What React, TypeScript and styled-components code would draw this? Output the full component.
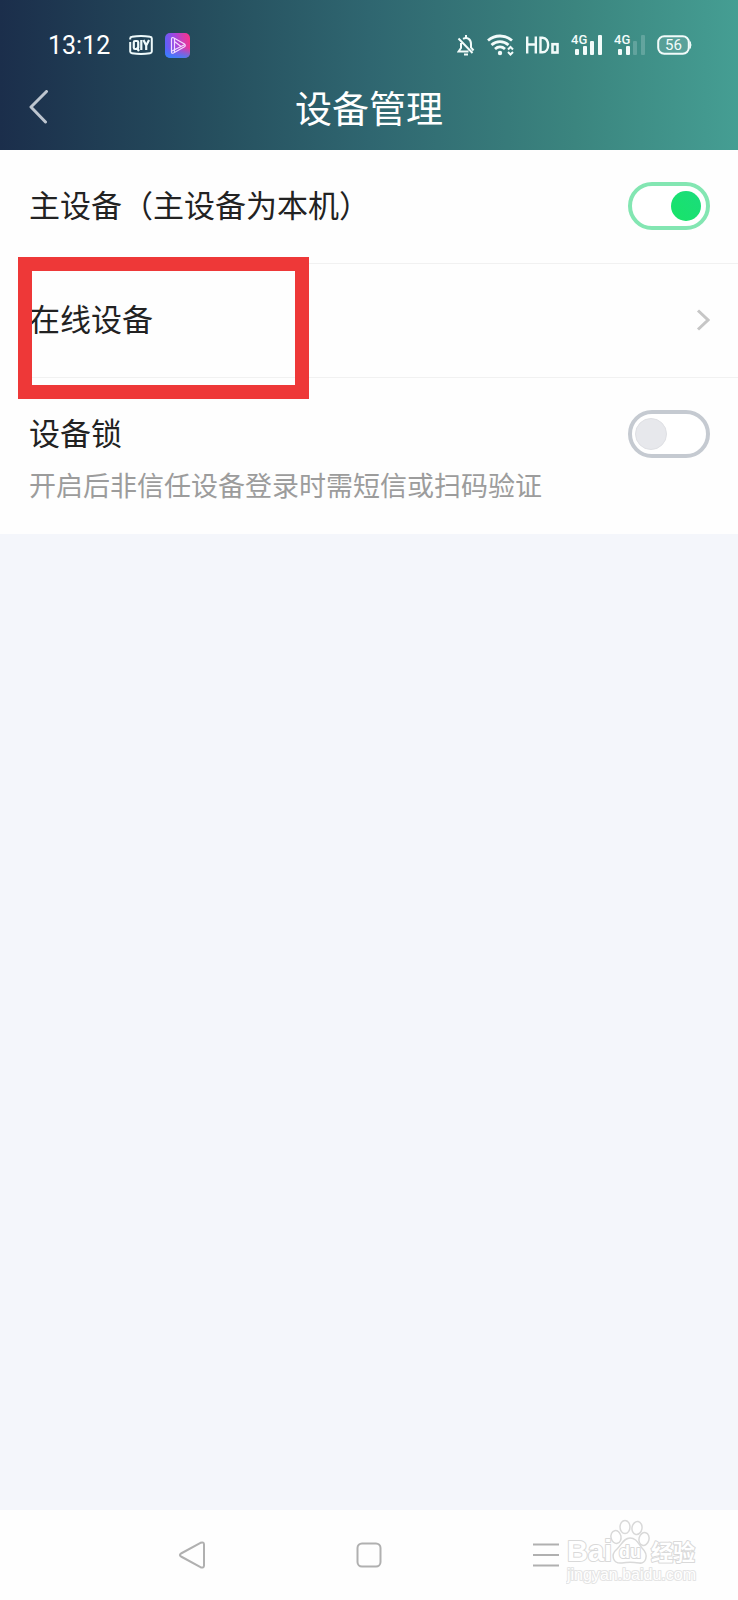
import React, { useState } from "react";
import styled, { createGlobalStyle } from "styled-components";

const GlobalStyle = createGlobalStyle`
  * { box-sizing: border-box; }
  html, body { margin: 0; padding: 0; }
  body {
    background: #f4f6fb;
    font-family: Roboto, "Noto Sans CJK SC", sans-serif;
    color: #222;
  }
`;

const Page = styled.div`
  min-height: 100vh;
  display: flex;
  flex-direction: column;
  background: #f4f6fb;
`;

const Header = styled.header`
  padding-top: 30px;
  color: #fff;
  background: linear-gradient(90deg, #1b2e4b 0%, #26505f 30%, #2f6670 50%, #3b857f 78%, #459e93 100%);
`;

const StatusBar = styled.div`
  height: 30px;
  padding: 0 46px 0 48px;
  display: flex;
  align-items: center;
  justify-content: space-between;
`;

const StatusGroup = styled.div`
  display: flex;
  align-items: center;
  gap: 12px;
  svg { display: block; }
`;

const Clock = styled.time`
  font-size: 25px;
  line-height: 30px;
  padding-top: 2px;
  margin-right: 7px;
`;

const TitleBar = styled.div`
  height: 90px;
  padding: 4px 24px 0;
  display: grid;
  grid-template-columns: 48px 1fr 48px;
  align-items: center;
`;

const BackButton = styled.button`
  height: 48px;
  padding: 0 0 0 5px;
  border: 0;
  background: none;
  display: flex;
  align-items: center;
`;

const Title = styled.h1`
  margin: 0;
  padding-top: 8px;
  font-size: 37px;
  line-height: 54px;
  font-weight: 400;
  text-align: center;
`;

const List = styled.main`
  background: #fefefe;
`;

const Row = styled.section<{ $divided?: boolean }>`
  position: relative;
  margin-left: 29px;
  padding: 32px 28px ${(p) => (p.$divided ? 33 : 29)}px 0;
  border-bottom: ${(p) => (p.$divided ? "1px solid #f1f1f1" : "0")};
`;

const RowLine = styled.div`
  display: flex;
  align-items: center;
  justify-content: space-between;
`;

const rowText = `
  padding-top: 2px;
  font-size: 31px;
  line-height: 46px;
  font-weight: 400;
  color: #222;
`;

const RowLabel = styled.label`
  ${rowText}
`;

const RowText = styled.span`
  ${rowText}
`;

const RowLink = styled.a`
  display: flex;
  flex: 1;
  align-items: center;
  justify-content: space-between;
  text-decoration: none;
`;

const Note = styled.p`
  margin: 11px 0 0;
  font-size: 27px;
  line-height: 36px;
  color: #9c9c9c;
`;

const Switch = styled.input`
  appearance: none;
  flex: none;
  margin: 0;
  width: 82px;
  height: 48px;
  padding: 0 5px 0 3px;
  border: 4px solid #c5cad1;
  border-radius: 24px;
  background: #fff;
  display: flex;
  align-items: center;

  &::before {
    content: "";
    width: 30px;
    height: 30px;
    border-radius: 50%;
    background: #e7e8ec;
    border: 1px solid #dfe0e4;
  }

  &:checked {
    justify-content: flex-end;
    border-color: #83e6b2;
  }

  &:checked::before {
    background: linear-gradient(45deg, #17e468, #1bdc7c);
    border: 0;
  }
`;

const Highlight = styled.div`
  position: absolute;
  top: -7px;
  left: -11px;
  width: 291px;
  height: 142px;
  border: 14px solid #ee3838;
  pointer-events: none;
  z-index: 1;
`;

const NavBar = styled.nav`
  position: relative;
  margin-top: auto;
  height: 90px;
  padding: 0 14%;
  background: #fefefe;
  display: flex;
`;

const NavButton = styled.button`
  flex: 1;
  padding: 0;
  border: 0;
  background: none;
  display: flex;
  align-items: center;
  justify-content: center;
`;

const Watermark = styled.div`
  position: absolute;
  right: 38px;
  top: 8px;
  svg { display: block; }
`;

function QiyIcon() {
  return (
    <svg width="24" height="20" viewBox="0 0 24 20" fill="none" stroke="#eefafb" aria-hidden="true">
      <path d="M1.200 4.500V3.500Q1.200 2 3 1.800Q12 0.200 21 1.800Q22.800 2 22.800 3.500V16.500Q22.800 18 21 18.200Q12 19.800 3 18.200Q1.200 18 1.200 16.500V7" strokeWidth="2" />
      <rect x="4.800" y="6" width="4.400" height="8" rx="1.200" strokeWidth="2.200" />
      <path d="M7.500 12.500L10 16M12.300 5V15M14.500 5L17.200 10.500L20 5M17.200 10V15" strokeWidth="2.200" />
    </svg>
  );
}

function VideoAppIcon() {
  return (
    <svg width="25" height="25" viewBox="0 0 25 25" aria-hidden="true">
      <defs>
        <linearGradient id="appFill" x1="0" y1="0.600" x2="1" y2="0.400">
          <stop offset="0" stopColor="#5563fb" />
          <stop offset="0.450" stopColor="#a346e0" />
          <stop offset="1" stopColor="#f5358f" />
        </linearGradient>
        <linearGradient id="appGlow" x1="0.500" y1="0.600" x2="0.500" y2="1">
          <stop offset="0" stopColor="#2e8bff" stopOpacity="0" />
          <stop offset="1" stopColor="#2e8bff" stopOpacity="0.800" />
        </linearGradient>
      </defs>
      <rect width="25" height="25" rx="5" fill="url(#appFill)" />
      <rect width="25" height="25" rx="5" fill="url(#appGlow)" />
      <g fill="none" stroke="#f3dcff" strokeWidth="1.200" strokeLinejoin="round">
        <path d="M6.500 6Q6.500 4 8.500 4.800L19.500 11Q21 12.500 19.500 13.800L8.500 20Q6.500 20.800 6.500 19Z" />
        <path d="M9.500 5V19.500M7 18L20 11.500M9.500 8.500L16 13.500" />
      </g>
    </svg>
  );
}

function MutedBellIcon() {
  return (
    <svg width="18" height="21" viewBox="0 0 18 21" fill="none" stroke="#f2fbfa" strokeWidth="2" aria-hidden="true">
      <path d="M6 3.800C10.500 1.500 14 4.500 14 9V12.500L16.500 15.500M11.500 16.500H1.500L4 13V8M9 0V3M7 19.500H11M1.500 3.500L15.500 18" />
    </svg>
  );
}

function WifiIcon() {
  return (
    <svg width="27" height="22" viewBox="0 0 27 22" fill="none" stroke="#f2fbfa" aria-hidden="true">
      <path d="M1 6.500C8 0.500 18 0.500 25 6.500M4.500 11C9.500 6.500 16.500 6.500 21.500 11M8 15C11 12.300 15 12.300 18 15" strokeWidth="2.800" />
      <circle cx="13" cy="19" r="2.200" fill="#f2fbfa" stroke="none" />
      <path d="M21 15.500L23.500 13L26 15.500M21 18L23.500 20.500L26 18" strokeWidth="2" />
    </svg>
  );
}

function HdIcon() {
  return (
    <svg width="33" height="22" viewBox="1 0 33 22" aria-hidden="true">
      <g fill="none" stroke="#f2fbfa" strokeWidth="2.400">
        <path d="M2.200 2.500V19.500M10.800 2.500V19.500M2 10.500H11" />
        <path d="M15.500 3.700V18.300H17.500C25 18.300 25 3.700 17.500 3.700Z" />
        <rect x="27.500" y="10.200" width="5" height="8.300" strokeWidth="2.600" />
      </g>
    </svg>
  );
}

const BAR_TOPS = [15, 12, 7, 1];

function SignalIcon({ level }: { level: number }) {
  return (
    <svg width="31" height="30" viewBox="0 -4 31 30" aria-hidden="true">
      <text x="0" y="10" fontSize="13" fontWeight="500" fill="#f2fbfa" fontFamily="Roboto, sans-serif">4G</text>
      {BAR_TOPS.map((top, i) => (
        <rect
          key={top}
          x={4 + i * 8 - (i > 1 ? 1 : 0)}
          y={top}
          width="4"
          height={21 - top}
          rx="1"
          fill="#f2fbfa"
          opacity={i < level ? 1 : 0.2}
        />
      ))}
    </svg>
  );
}

function BatteryIcon() {
  return (
    <svg width="35" height="22" viewBox="0 0 35 22" aria-label="56%">
      <rect x="1.200" y="2.200" width="30.600" height="17.600" rx="6" fill="#ffffff" fillOpacity="0.120" stroke="#f2fbfa" strokeWidth="2" />
      <path d="M33 7.500Q35 11 33 14.500Z" fill="#f2fbfa" stroke="#f2fbfa" />
      <text x="16.500" y="16" fontSize="15" textAnchor="middle" fill="#f2fbfa" fontFamily="Roboto, sans-serif">56</text>
    </svg>
  );
}

function BaiduMark() {
  return (
    <svg width="134" height="76" viewBox="0 0 134 76" role="img" aria-label="Baidu 经验">
      <g fill="#ffffff" stroke="#d9d9d9" strokeWidth="1.500" strokeLinejoin="round">
        <ellipse cx="50" cy="19" rx="5" ry="6.500" transform="rotate(-12 50 19)" />
        <ellipse cx="59" cy="9" rx="5" ry="6.500" />
        <ellipse cx="71" cy="10" rx="5" ry="6.500" transform="rotate(10 71 10)" />
        <ellipse cx="78" cy="21" rx="5" ry="6.500" transform="rotate(15 78 21)" />
        <path d="M64 20C70 20 72 25 76 30C84 38 79 46 73 45C67 44 61 44 56 45C47 46 44 37 51 31C56 26 58 20 64 20Z" />
      </g>
      <g fill="#ffffff" stroke="#d9d9d9" strokeWidth="2" strokeLinejoin="round" paintOrder="stroke" fontWeight="700">
        <text x="1" y="43" fontSize="29" fontFamily="'Liberation Sans', sans-serif">Bai</text>
        <text x="64" y="40" fontSize="18" textAnchor="middle" fontFamily="'Liberation Sans', sans-serif">du</text>
        <text x="85" y="42" fontSize="22" fontFamily="'Noto Sans CJK SC', sans-serif">经验</text>
        <text x="1" y="62" fontSize="16" fontWeight="400" stroke="#e4e4e4" fontFamily="'Liberation Sans', sans-serif">jingyan.baidu.com</text>
      </g>
    </svg>
  );
}

export default function App() {
  const [primary, setPrimary] = useState(true);
  const [locked, setLocked] = useState(false);

  return (
    <Page>
      <GlobalStyle />
      <Header>
        <StatusBar>
          <StatusGroup>
            <Clock>13:12</Clock>
            <QiyIcon />
            <VideoAppIcon />
          </StatusGroup>
          <StatusGroup>
            <MutedBellIcon />
            <WifiIcon />
            <HdIcon />
            <SignalIcon level={4} />
            <SignalIcon level={2} />
            <BatteryIcon />
          </StatusGroup>
        </StatusBar>
        <TitleBar>
          <BackButton type="button" aria-label="返回">
            <svg width="20" height="34" viewBox="0 0 20 34" fill="none" stroke="#bdc5cf" strokeWidth="3" strokeLinecap="round" strokeLinejoin="round">
              <path d="M17.500 1.500L2 17L16.500 32" />
            </svg>
          </BackButton>
          <Title>设备管理</Title>
        </TitleBar>
      </Header>

      <List>
        <Row $divided>
          <RowLine>
            <RowLabel htmlFor="primary-device">主设备（主设备为本机）</RowLabel>
            <Switch id="primary-device" type="checkbox" role="switch" checked={primary} onChange={(e) => setPrimary(e.target.checked)} />
          </RowLine>
        </Row>
        <Row $divided>
          <RowLine>
            <RowLink href="#online">
              <RowText>在线设备</RowText>
              <svg width="14" height="22" viewBox="0 0 14 22" fill="none" stroke="#c6c6c6" strokeWidth="3" aria-hidden="true">
                <path d="M2 1.500L12 11L2 20.500" />
              </svg>
            </RowLink>
          </RowLine>
          <Highlight />
        </Row>
        <Row>
          <RowLine>
            <RowLabel htmlFor="device-lock">设备锁</RowLabel>
            <Switch id="device-lock" type="checkbox" role="switch" checked={locked} onChange={(e) => setLocked(e.target.checked)} />
          </RowLine>
          <Note>开启后非信任设备登录时需短信或扫码验证</Note>
        </Row>
      </List>

      <NavBar>
        <NavButton type="button" aria-label="后退">
          <svg width="28" height="28" viewBox="0 0 28 28" fill="none" stroke="#b0b0b0" strokeWidth="2" strokeLinejoin="round">
            <path d="M3 12.500L22.500 1.800Q26 0.500 26 3.500V24.500Q26 27.500 22.500 26.200L3 15.500Q0.800 14 3 12.500Z" />
          </svg>
        </NavButton>
        <NavButton type="button" aria-label="主屏幕">
          <svg width="26" height="26" viewBox="0 0 26 26" fill="none" stroke="#b0b0b0" strokeWidth="2">
            <rect x="1.500" y="1.500" width="23" height="23" rx="4.500" />
          </svg>
        </NavButton>
        <NavButton type="button" aria-label="菜单">
          <svg width="26" height="26" viewBox="0 0 26 26" fill="none" stroke="#b0b0b0" strokeWidth="2">
            <path d="M0 2.500H26M0 13H26M0 23.500H26" />
          </svg>
        </NavButton>
        <Watermark>
          <BaiduMark />
        </Watermark>
      </NavBar>
    </Page>
  );
}
